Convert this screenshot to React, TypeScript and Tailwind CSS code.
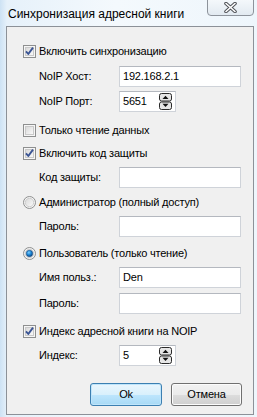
import React from "react";

// small win7-ish controls drawn inline
function CheckBox({ checked }: { checked?: boolean }) {
  return (
    <svg width="13" height="13" viewBox="0 0 13 13" className="shrink-0">
      <defs>
        <linearGradient id="cbg" x1="0" y1="0" x2="1" y2="1">
          <stop offset="0" stopColor="#d8d8d8" />
          <stop offset="1" stopColor="#fbfbfb" />
        </linearGradient>
      </defs>
      <rect x="0.5" y="0.5" width="12" height="12" fill="#f6f6f6" stroke="#8e8f8f" />
      <rect x="2.5" y="2.5" width="8" height="8" fill="url(#cbg)" stroke="#c9c9c9" />
      {checked && (
        <path d="M3 6.3 L5.3 9 L10 2.6" fill="none" stroke="#3a5494" strokeWidth="1.9" strokeLinejoin="round" />
      )}
    </svg>
  );
}

function Radio({ checked }: { checked?: boolean }) {
  return (
    <svg width="13" height="13" viewBox="0 0 13 13" className="shrink-0">
      <defs>
        <radialGradient id="rdot" cx="0.4" cy="0.35" r="0.7">
          <stop offset="0" stopColor="#7fd0ff" />
          <stop offset="0.5" stopColor="#1b86d6" />
          <stop offset="1" stopColor="#0c3f7a" />
        </radialGradient>
        <linearGradient id="rbg" x1="0" y1="0" x2="1" y2="1">
          <stop offset="0" stopColor="#d9d9d9" />
          <stop offset="1" stopColor="#fafafa" />
        </linearGradient>
      </defs>
      <circle cx="6.5" cy="6.5" r="6" fill="#f4f4f4" stroke="#8e8f8f" />
      <circle cx="6.5" cy="6.5" r="4.2" fill="url(#rbg)" stroke="#cfcfcf" />
      {checked && <circle cx="6.5" cy="6.5" r="3.2" fill="url(#rdot)" stroke="#1b4f86" strokeWidth="0.6" />}
    </svg>
  );
}

function Spinner() {
  return (
    <svg width="13" height="17" viewBox="0 0 13 17" className="shrink-0">
      <rect x="0.5" y="0.5" width="12" height="7.5" rx="2" fill="#e6e6e6" stroke="#2a2a2a" />
      <path d="M3.5 6 L9.5 6 L6.5 2.8 Z" fill="#111" />
      <rect x="0.5" y="9" width="12" height="7.5" rx="2" fill="#e6e6e6" stroke="#2a2a2a" />
      <path d="M3.5 10.8 L9.5 10.8 L6.5 14 Z" fill="#111" />
    </svg>
  );
}

function CheckRow({ label, checked, mt }: { label: string; checked?: boolean; mt: string }) {
  return (
    <div className={`flex items-center gap-[3px] h-[16px] pl-[16px] ${mt}`}>
      <CheckBox checked={checked} />
      <span>{label}</span>
    </div>
  );
}

function RadioRow({ label, checked, mt }: { label: string; checked?: boolean; mt: string }) {
  return (
    <div className={`flex items-center gap-[3px] h-[16px] pl-[16px] ${mt}`}>
      <Radio checked={checked} />
      <span>{label}</span>
    </div>
  );
}

function Field({ label, value, mt, spin }: { label: string; value?: string; mt: string; spin?: boolean }) {
  return (
    <div className={`flex items-center h-[21px] pl-[32px] ${mt}`}>
      <span className="w-[80px] shrink-0">{label}</span>
      <div
        className={`h-[21px] flex items-center bg-white border border-[#cfd3d9] border-t-[#b4b8bf] pl-[3px] ${
          spin ? "w-[57px] pr-[3px]" : "w-[122px]"
        }`}
      >
        <span className="flex-1">{value}</span>
        {spin && <Spinner />}
      </div>
    </div>
  );
}

export default function App() {
  return (
    <div className="w-[257px] h-[417px] overflow-hidden font-['Liberation_Sans',Arial,sans-serif] text-[11px] tracking-[-0.2px] text-black bg-[linear-gradient(90deg,#cde2f4_0px,#e6f1fa_7px,#f4f9fd_45%,#eef6fc_100%)]">
      {/* title bar */}
      <div className="flex h-[26px]">
        <span className="pl-[8px] pt-[5px] text-[12px] tracking-normal">Синхронизация адресной книги</span>
        <div className="ml-auto mr-[3px] w-[47px] h-[17px] -mt-px flex items-center justify-center border border-[#8d939b] rounded-b-[4px] bg-[linear-gradient(180deg,#f4f8fb,#e2eaf1)]">
          <svg width="13" height="11" viewBox="0 0 13 11">
            <path d="M2 1.5 L11 9.5 M11 1.5 L2 9.5" stroke="#4f5257" strokeWidth="3.6" strokeLinecap="round" />
            <path d="M2 1.5 L11 9.5 M11 1.5 L2 9.5" stroke="#ffffff" strokeWidth="1.6" strokeLinecap="round" />
          </svg>
        </div>
      </div>

      {/* client area */}
      <div className="ml-[6px] w-[248px] h-[389px] border border-[#8c9198] bg-[#f0f0f0] flex flex-col">
        <CheckRow label="Включить синхронизацию" checked mt="mt-[16px]" />
        <Field label="NoIP Хост:" value="192.168.2.1" mt="mt-[7px]" />
        <Field label="NoIP Порт:" value="5651" mt="mt-[4px]" spin />
        <CheckRow label="Только чтение данных" mt="mt-[10px]" />
        <CheckRow label="Включить код защиты" checked mt="mt-[7px]" />
        <Field label="Код защиты:" mt="mt-[6px]" />
        <RadioRow label="Администратор (полный доступ)" mt="mt-[6px]" />
        <Field label="Пароль:" mt="mt-[6px]" />
        <RadioRow label="Пользователь (только чтение)" checked mt="mt-[8px]" />
        <Field label="Имя польз.:" value="Den" mt="mt-[6px]" />
        <Field label="Пароль:" mt="mt-[5px]" />
        <CheckRow label="Индекс адресной книги на NOIP" checked mt="mt-[9px]" />
        <Field label="Индекс:" value="5" mt="mt-[6px]" spin />

        <div className="flex justify-end gap-[9px] pr-[11px] mt-[17px]">
          <button className="w-[72px] h-[23px] rounded-[3px] border border-[#3c7fb1] bg-[linear-gradient(180deg,#eaf6fd_0%,#d9f0fc_50%,#bee6fd_51%,#a7d9f5_100%)] shadow-[inset_0_0_0_1px_#bfe5fb]">
            Ok
          </button>
          <button className="w-[71px] h-[23px] rounded-[3px] border border-[#707070] bg-[linear-gradient(180deg,#f2f2f2_0%,#ebebeb_50%,#dddddd_51%,#cfcfcf_100%)] shadow-[inset_0_0_0_1px_#fcfcfc]">
            Отмена
          </button>
        </div>
      </div>
    </div>
  );
}
